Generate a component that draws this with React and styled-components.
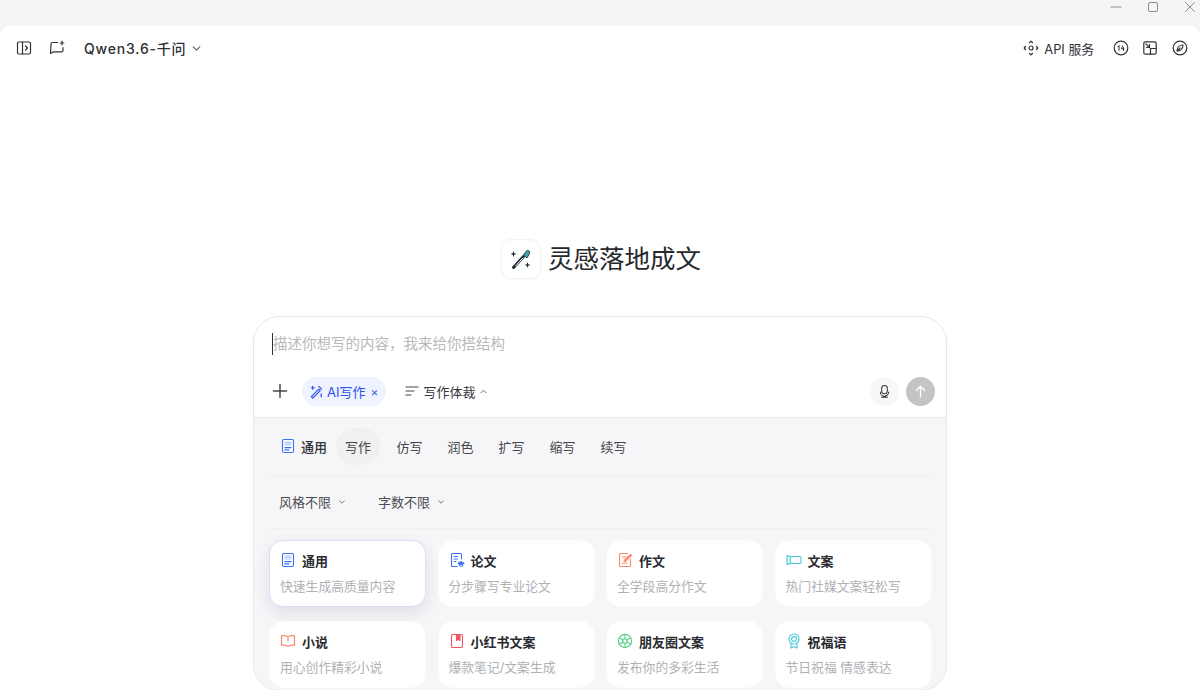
import React from "react";
import styled, { createGlobalStyle } from "styled-components";

const GlobalStyle = createGlobalStyle`
  html, body {
    margin: 0;
    padding: 0;
    background: #f5f5f7;
    overflow: hidden;
  }
  * {
    box-sizing: border-box;
  }
  body {
    font-family: "Inter", "Noto Sans CJK SC", sans-serif;
  }
`;

const Page = styled.div`
  width: 1200px;
  height: 690px;
  display: flex;
  flex-direction: column;
  background: #f5f5f7;
  overflow: hidden;
`;

const TitleBar = styled.div`
  height: 26px;
  flex: none;
  display: flex;
  justify-content: flex-end;
  align-items: center;
  color: #8c8c90;
`;

const WindowButton = styled.div`
  width: 37px;
  height: 16px;
  display: flex;
  align-items: center;
  justify-content: center;
  margin-top: -12px;
  margin-right: ${(p) => p.$mr || 0}px;
`;

const Main = styled.div`
  flex: 1;
  min-height: 0;
  background: #fff;
  border-radius: 10px 10px 0 0;
  display: flex;
  flex-direction: column;
  align-items: center;
`;

const Header = styled.div`
  width: 100%;
  height: 44px;
  flex: none;
  display: flex;
  align-items: center;
  padding: 0 12px 0 16px;
  color: #333;
`;

const IconSlot = styled.div`
  width: 16px;
  height: 16px;
  display: flex;
  margin-right: ${(p) => p.$mr || 0}px;
`;

const ModelName = styled.div`
  font-size: 14px;
  font-weight: 500;
  letter-spacing: 0.8px;
  color: #2c2f36;
  margin-left: 3px;
`;

const ModelChevron = styled.div`
  display: flex;
  margin-left: 5px;
`;

const Spacer = styled.div`
  flex: 1;
`;

const ApiLabel = styled.div`
  font-size: 12.8px;
  color: #2c2f36;
  margin: 0 19px 0 5px;
`;

const Hero = styled.div`
  display: flex;
  align-items: center;
  gap: 7px;
  margin-top: 168px;
  height: 42px;
  margin-left: 2px;
`;

const LogoBox = styled.div`
  width: 40px;
  height: 40px;
  border-radius: 10px 12px 10px 10px;
  background: #fff;
  border: 1px solid #f2f2f3;
  box-shadow: 0 1px 3px rgba(0, 0, 0, 0.03);
  display: flex;
  align-items: center;
  justify-content: center;
`;

const HeroTitle = styled.h1`
  margin: 0;
  font-size: 25.5px;
  line-height: 42px;
  font-weight: 400;
  color: #26282d;
`;

const Panel = styled.div`
  width: 694px;
  height: 375px;
  margin-top: 36px;
  flex: none;
  border: 1px solid #e8e8ea;
  border-radius: 26px;
  background: #f6f6f8;
  overflow: hidden;
  display: flex;
  flex-direction: column;
`;

const InputArea = styled.div`
  height: 101px;
  flex: none;
  background: #fff;
  border-bottom: 1px solid #e6e6e8;
  display: flex;
  flex-direction: column;
  padding: 16px 11px 0 18px;
`;

const Placeholder = styled.div`
  font-size: 14.5px;
  line-height: 22px;
  color: #b9b9bd;
  border-left: 1px solid #333;
  height: 22px;
`;

const InputTools = styled.div`
  display: flex;
  align-items: center;
  margin-top: 21px;
  height: 30px;
`;

const AiChip = styled.div`
  height: 29px;
  display: flex;
  align-items: center;
  background: #eff2ff;
  border-radius: 15px;
  color: #2f4df0;
  font-size: 13px;
  padding: 0 8px 0 7px;
  margin: 0 19px 0 14px;
  gap: 3px;
`;

const ChipClose = styled.span`
  font-size: 12px;
  margin-left: 2px;
  color: #4a63f0;
`;

const GenreSelect = styled.div`
  display: flex;
  align-items: center;
  gap: 4px;
  font-size: 13px;
  color: #34363b;
`;

const RoundButton = styled.div`
  width: 29px;
  height: 29px;
  border-radius: 50%;
  background: ${(p) => (p.$primary ? "#c4c4c4" : "#f7f7f7")};
  margin-left: ${(p) => (p.$primary ? 7 : 0)}px;
  display: flex;
  align-items: center;
  justify-content: center;
`;

const Body = styled.div`
  flex: 1;
  padding: 0 15px;
  display: flex;
  flex-direction: column;
`;

const TabRow = styled.div`
  height: 59px;
  flex: none;
  display: flex;
  align-items: center;
  border-bottom: 1px solid #f0f0f2;
  padding-left: 11px;
  padding-bottom: 2px;
`;

const ActiveLabel = styled.div`
  display: flex;
  align-items: center;
  gap: 5px;
  font-size: 13px;
  font-weight: 500;
  color: #33353a;
  margin-right: 9px;
`;

const Tab = styled.div`
  width: ${(p) => (p.$active ? 44 : 51)}px;
  height: 37px;
  border-radius: 19px;
  display: flex;
  align-items: center;
  justify-content: center;
  font-size: 13px;
  color: #44464b;
  background: ${(p) => (p.$active ? "#f0f0f1" : "transparent")};
  margin-right: ${(p) => (p.$active ? 4 : 0)}px;
`;

const FilterRow = styled.div`
  height: 52px;
  flex: none;
  display: flex;
  align-items: center;
  gap: 32px;
  border-bottom: 1px solid #f0f0f2;
  padding: 0 0 2px 10px;
`;

const Filter = styled.div`
  display: flex;
  align-items: center;
  gap: 7px;
  font-size: 13px;
  color: #4a4c51;
`;

const CardGrid = styled.div`
  display: grid;
  grid-template-columns: repeat(4, 157px);
  grid-auto-rows: 67px;
  column-gap: 11.5px;
  row-gap: 14px;
  margin-top: 11px;
`;

const Card = styled.div`
  background: #fff;
  border-radius: 14px;
  padding: 10px 10px 0;
  border: 1px solid ${(p) => (p.$selected ? "#d6e0fb" : "#fbfbfc")};
  box-shadow: ${(p) => (p.$selected ? "0 6px 16px rgba(40, 50, 90, 0.11)" : "none")};
`;

const CardHead = styled.div`
  display: flex;
  align-items: center;
  gap: 6px;
  height: 18px;
  font-size: 13px;
  font-weight: 700;
  color: #2a2b30;
`;

const CardText = styled.div`
  margin-top: 9px;
  font-size: 12.8px;
  line-height: 18px;
  color: #b0b1b5;
`;

const Svg = ({ children, size = 16, view = 16, ...rest }) => (
  <svg
    width={size}
    height={size}
    viewBox={`0 0 ${view} ${view}`}
    fill="none"
    stroke="currentColor"
    strokeWidth="1.2"
    strokeLinecap="round"
    strokeLinejoin="round"
    {...rest}
  >
    {children}
  </svg>
);

const Chevron = ({ up, size = 10, color = "#666" }) => (
  <Svg size={size} view={10} stroke={color} strokeWidth="1.1">
    <path d={up ? "M2 6.5 5 3.5 8 6.5" : "M2 3.5 5 6.5 8 3.5"} />
  </Svg>
);

const cards = [
  { title: "通用", text: "快速生成高质量内容", icon: "doc", selected: true },
  { title: "论文", text: "分步骤写专业论文", icon: "paper" },
  { title: "作文", text: "全学段高分作文", icon: "essay" },
  { title: "文案", text: "热门社媒文案轻松写", icon: "copy" },
  { title: "小说", text: "用心创作精彩小说", icon: "book" },
  { title: "小红书文案", text: "爆款笔记/文案生成", icon: "note" },
  { title: "朋友圈文案", text: "发布你的多彩生活", icon: "moments" },
  { title: "祝福语", text: "节日祝福 情感表达", icon: "medal" },
];

const DocIcon = () => (
  <Svg stroke="#3f6ff5" strokeWidth="1.1">
    <rect x="2.5" y="1.5" width="11" height="13" rx="1.5" fill="#fff" />
    <rect x="4.6" y="3.4" width="6.8" height="4.2" fill="#c9d6fb" stroke="none" />
    <path d="M4.8 9.6h6.4M4.8 11.9h4" />
  </Svg>
);

const CardIcon = ({ type }) => {
  if (type === "doc") return <DocIcon />;
  if (type === "paper")
    return (
      <Svg stroke="#3f6ff5" strokeWidth="1.1">
        <path d="M8 14.5H3.5a1 1 0 0 1-1-1v-11a1 1 0 0 1 1-1h8a1 1 0 0 1 1 1V7" />
        <path d="M5 4.5h3.5M5 7h3.5M5 9.5h2" />
        <path d="M9 11.2l3-1.4 3 1.4-3 1.4z" fill="#3f6ff5" />
        <path d="M10.4 12.4v1.2c1 .8 2.2.8 3.2 0v-1.2" />
      </Svg>
    );
  if (type === "essay")
    return (
      <Svg stroke="#f98a6f" strokeWidth="1.1">
        <path d="M13.5 7v6.5a1 1 0 0 1-1 1h-9a1 1 0 0 1-1-1v-11a1 1 0 0 1 1-1h7" />
        <path d="M5 5h4M5 11h5" />
        <path d="M7 8.5 13.5 2.5l1 1L8 9.5z" fill="#f98a6f" />
      </Svg>
    );
  if (type === "copy")
    return (
      <Svg stroke="#45c8dc" strokeWidth="1.1">
        <path d="M4.5 4.5H14a1 1 0 0 1 1 1v5a1 1 0 0 1-1 1H4.500" />
        <path d="M1 3.500 4.500 4.500v7L1 12.500z" fill="#dff6fa" />
      </Svg>
    );
  if (type === "book")
    return (
      <Svg stroke="#f98a6f" strokeWidth="1.2">
        <path d="M8 4C6.500 2.800 4 2.500 1.500 2.800v9.400C4 12 6.500 12.300 8 13.500c1.500-1.200 4-1.500 6.500-1.300V2.800C12 2.500 9.500 2.800 8 4z" />
        <path d="M8 5v3" />
      </Svg>
    );
  if (type === "note")
    return (
      <Svg stroke="#f1555d" strokeWidth="1.1">
        <rect x="2.500" y="1.500" width="11" height="13" rx="1.200" />
        <path d="M7.500 1.500h3.500v6l-1.750-1.300L7.500 7.500z" fill="#f1555d" />
      </Svg>
    );
  if (type === "moments")
    return (
      <Svg stroke="#55cf86" strokeWidth="1.1">
        <circle cx="8" cy="8" r="6.600" />
        <circle cx="8" cy="8" r="2.200" />
        <path d="M8 1.400v4.400M13.700 4.700 9.900 6.900M13.700 11.300 9.900 9.100M8 14.600v-4.400M2.300 11.300l3.800-2.200M2.300 4.700l3.800 2.200" />
      </Svg>
    );
  return (
    <Svg stroke="#45c8dc" strokeWidth="1.1">
      <circle cx="8" cy="6" r="5" />
      <circle cx="8" cy="6" r="2.400" />
      <path d="M5 10.500v4.500l3-1.300 3 1.300v-4.500" />
    </Svg>
  );
};

const App = () => {
  return (
    <Page>
      <GlobalStyle />
      <TitleBar>
        <WindowButton>
          <Svg size={12} view={12} strokeWidth="1">
            <path d="M1 6h10" />
          </Svg>
        </WindowButton>
        <WindowButton>
          <Svg size={12} view={12} strokeWidth="1">
            <rect x="1.500" y="1.500" width="9" height="9" rx="1.500" />
          </Svg>
        </WindowButton>
        <WindowButton $mr={-8}>
          <Svg size={12} view={12} strokeWidth="1">
            <path d="M1.500 1.500l9 9M10.500 1.500l-9 9" />
          </Svg>
        </WindowButton>
      </TitleBar>
      <Main>
        <Header>
          <IconSlot $mr={17}>
            <Svg>
              <rect x="1.500" y="2" width="13" height="12" rx="1.500" />
              <path d="M6.500 2v12M9.500 6l2 2-2 2" />
            </Svg>
          </IconSlot>
          <IconSlot $mr={16}>
            <Svg>
              <path d="M8.500 2.500H3.500a1.500 1.500 0 0 0-1.500 1.500L1.500 13.500 4.500 11.800h8a1.500 1.500 0 0 0 1.500-1.500V7.500" />
              <path d="M13 1.200v3.600M11.200 3h3.600" />
            </Svg>
          </IconSlot>
          <ModelName>Qwen3.6-千问</ModelName>
          <ModelChevron>
            <Chevron size={11} />
          </ModelChevron>
          <Spacer />
          <IconSlot>
            <Svg>
              <path d="M6.500 2.500 8 1.200l1.500 1.300M2.500 6.500 1.200 8l1.300 1.500M13.500 6.500 14.800 8l-1.300 1.500M6.500 13.500 8 14.800l1.500-1.300" />
              <circle cx="8" cy="8" r="2" />
            </Svg>
          </IconSlot>
          <ApiLabel>API 服务</ApiLabel>
          <IconSlot $mr={13}>
            <Svg>
              <circle cx="8" cy="8" r="6.800" />
              <path d="M6 5.800v4.500M4.800 7l1.200-1.200M9.500 5.800l-1 3h2.500M10.500 7.500v3" strokeWidth="1" />
            </Svg>
          </IconSlot>
          <IconSlot $mr={14}>
            <Svg>
              <rect x="1.800" y="1.800" width="12.400" height="12.400" rx="1.500" />
              <path d="M8.500 8.500h5.700M8.500 8.500v5.700M4 4l3.500 3.500M4.500 7.500h3v-3" />
            </Svg>
          </IconSlot>
          <IconSlot>
            <Svg>
              <circle cx="8" cy="8" r="6.800" />
              <path d="M11 5C11 8.500 8.500 11 5 11 5 7.500 7.500 5 11 5zM5 11l3-3" />
            </Svg>
          </IconSlot>
        </Header>

        <Hero>
          <LogoBox>
            <svg width="24" height="24" viewBox="0 0 24 24" fill="none">
              <path d="M4.500 20.500 14.500 9.500" stroke="#1d2b33" strokeWidth="3" strokeLinecap="round" />
              <path d="M6.500 19 14 10.800" stroke="#fff" strokeWidth="1" />
              <path d="M14.500 8 17 4.500a2 2 0 0 1 3.500 2L18 11z" fill="#39a5ad" stroke="#1d2b33" strokeWidth="0.800" />
              <path d="M4.500 4 5.300 6.200 7.500 7 5.300 7.800 4.500 10 3.700 7.800 1.500 7 3.700 6.200z" fill="#1d2b33" />
              <path d="M18.500 15 19.200 17.300 21.500 18 19.200 18.700 18.500 21 17.800 18.700 15.500 18 17.800 17.300z" fill="#1d2b33" />
            </svg>
          </LogoBox>
          <HeroTitle>灵感落地成文</HeroTitle>
        </Hero>

        <Panel>
          <InputArea>
            <Placeholder>描述你想写的内容，我来给你搭结构</Placeholder>
            <InputTools>
              <Svg size={16} stroke="#44464b" strokeWidth="1.500">
                <path d="M8 1.500v13M1.500 8h13" />
              </Svg>
              <AiChip>
                <Svg size={15} stroke="#2f4df0" strokeWidth="1.300">
                  <path d="M2.500 13.500 10.500 5.500l1.500 1.500-8 8zM10.500 2.500l3 3" />
                  <path d="M4 2.500v3M2.500 4h3M13 10.500v3" />
                </Svg>
                AI写作
                <ChipClose>×</ChipClose>
              </AiChip>
              <GenreSelect>
                <Svg size={14} view={14} stroke="#44464b">
                  <path d="M1 3h12M1 7h8M1 11h5" />
                </Svg>
                写作体裁
                <Chevron up size={9} />
              </GenreSelect>
              <Spacer />
              <RoundButton>
                <Svg size={15} stroke="#3a3a3a" strokeWidth="1.100">
                  <rect x="5" y="1.500" width="6" height="9" rx="3" />
                  <path d="M3.500 8.500a4.500 4.500 0 0 0 9 0M5 14h6" />
                </Svg>
              </RoundButton>
              <RoundButton $primary>
                <Svg size={15} stroke="#fff" strokeWidth="1.500">
                  <path d="M8 13.500v-11M3.500 7 8 2.500 12.500 7" />
                </Svg>
              </RoundButton>
            </InputTools>
          </InputArea>
          <Body>
            <TabRow>
              <ActiveLabel>
                <DocIcon />
                通用
              </ActiveLabel>
              <Tab $active>写作</Tab>
              {["仿写", "润色", "扩写", "缩写", "续写"].map((t) => (
                <Tab key={t}>{t}</Tab>
              ))}
            </TabRow>
            <FilterRow>
              <Filter>
                风格不限
                <Chevron size={8} />
              </Filter>
              <Filter>
                字数不限
                <Chevron size={8} />
              </Filter>
            </FilterRow>
            <CardGrid>
              {cards.map((c) => (
                <Card key={c.title} $selected={c.selected}>
                  <CardHead>
                    <CardIcon type={c.icon} />
                    {c.title}
                  </CardHead>
                  <CardText>{c.text}</CardText>
                </Card>
              ))}
            </CardGrid>
          </Body>
        </Panel>
      </Main>
    </Page>
  );
};

export default App;
